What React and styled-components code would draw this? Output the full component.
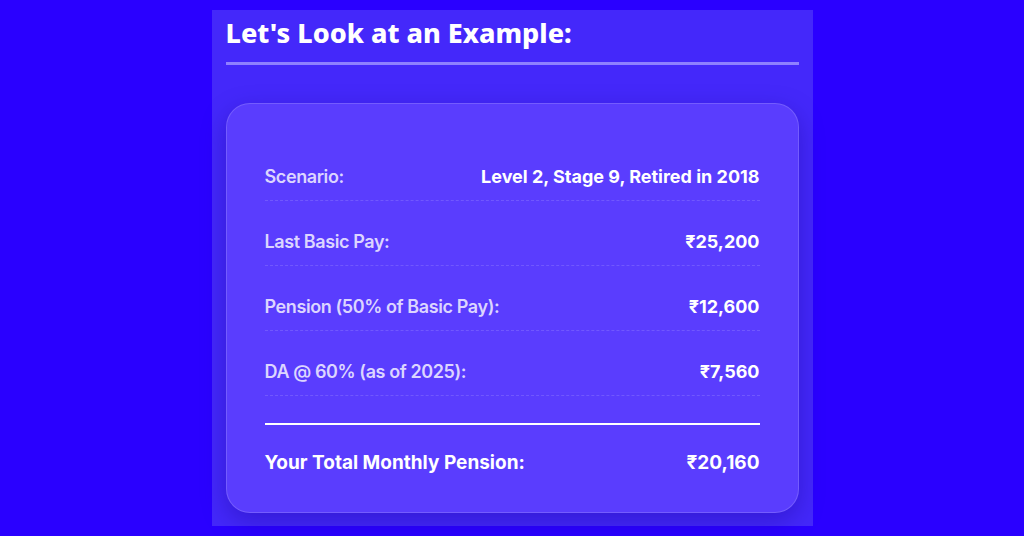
import styled, { createGlobalStyle } from 'styled-components';

const GlobalStyle = createGlobalStyle`
    html, body {
        margin: 0;
        padding: 0;
        background: #2a00ff;
        height: 536px;
        overflow: hidden;
    }
`;

const Page = styled.div`
    display: flex;
    justify-content: center;
    padding-top: 10px;
`;

const Panel = styled.section`
    width: 601px;
    height: 516px;
    box-sizing: border-box;
    padding: 7px 14px 14px;
    background: #4428fa;
    display: flex;
    flex-direction: column;
`;

const Title = styled.h2`
    margin: 0;
    padding-bottom: 13px;
    border-bottom: 3px solid #8f80ff;
    font-family: 'Noto Sans', sans-serif;
    font-size: 27px;
    line-height: 32px;
    font-weight: 800;
    color: #ffffff;
`;

const Card = styled.div`
    margin-top: 38px;
    box-sizing: border-box;
    padding: 32px 38px 38px;
    background: #5a3dfe;
    border: 1px solid rgba(255, 255, 255, 0.16);
    border-radius: 24px;
    box-shadow: 0 8px 24px rgba(20, 0, 140, 0.35);
    font-family: 'Inter', sans-serif;
`;

const Row = styled.div`
    display: flex;
    justify-content: space-between;
    align-items: center;
    padding: ${p => (p.$total ? '27px 0 0' : '30px 0 12px')};
    border-bottom: ${p => (p.$total ? 'none' : '1px dashed rgba(255, 255, 255, 0.14)')};
    line-height: 22px;
`;

const Label = styled.span`
    font-size: ${p => (p.$total ? '19px' : '18px')};
    font-weight: ${p => (p.$total ? 700 : 600)};
    color: ${p => (p.$total ? '#ffffff' : '#dcd5ff')};
    letter-spacing: ${p => (p.$total ? '0' : '-0.4px')};
`;

const Value = styled.span`
    font-size: ${p => (p.$total ? '19px' : '18px')};
    font-weight: 700;
    color: #ffffff;
`;

const Divider = styled.div`
    margin-top: 27px;
    height: 2px;
    background: #ffffff;
`;

const rows = [
    ['Scenario:', 'Level 2, Stage 9, Retired in 2018'],
    ['Last Basic Pay:', '₹25,200'],
    ['Pension (50% of Basic Pay):', '₹12,600'],
    ['DA @ 60% (as of 2025):', '₹7,560'],
];

export default function App() {
    return (
        <>
            <GlobalStyle />
            <Page>
                <Panel>
                    <Title>Let's Look at an Example:</Title>
                    <Card>
                        {rows.map(([label, value]) => (
                            <Row key={label}>
                                <Label>{label}</Label>
                                <Value>{value}</Value>
                            </Row>
                        ))}
                        <Divider />
                        <Row $total>
                            <Label $total>Your Total Monthly Pension:</Label>
                            <Value $total>₹20,160</Value>
                        </Row>
                    </Card>
                </Panel>
            </Page>
        </>
    );
}
